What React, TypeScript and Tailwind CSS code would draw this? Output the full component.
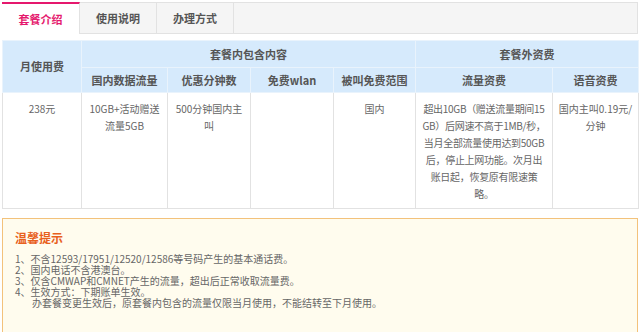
import React from 'react';

const tabs = ['套餐介绍', '使用说明', '办理方式'];

const notes = [
  '1、不含12593/17951/12520/12586等号码产生的基本通话费。',
  '2、国内电话不含港澳台。',
  '3、仅含CMWAP和CMNET产生的流量，超出后正常收取流量费。',
  '4、生效方式：下期账单生效。',
];

const flowFee = [
  '超出10GB（赠送流量期间15',
  'GB）后网速不高于1MB/秒，',
  '当月全部流量使用达到50GB',
  '后，停止上网功能。次月出',
  '账日起，恢复原有限速策',
  '略。',
];

export default function App() {
  return (
    <div
      className="w-[640px] h-[332px] overflow-hidden bg-white px-[2px] pt-[2px]"
      style={{ fontFamily: '"Noto Sans CJK SC", "Noto Sans", sans-serif' }}
    >
      {/* tabs */}
      <div className="flex h-[32px] bg-[#f5f5f5] border border-[#e2e2e2]">
        {tabs.map((t, i) => (
          <div
            key={t}
            className={
              i === 0
                ? 'w-[78px] -mt-px -ml-px h-[32px] flex items-center justify-center bg-white border-t-2 border-[#e5186d] border-r border-r-[#e2e2e2] text-[11px] font-bold text-[#e5186d]'
                : 'w-[77px] flex items-center justify-center border-r border-[#e2e2e2] text-[11px] font-bold text-[#555]'
            }
          >
            {t}
          </div>
        ))}
      </div>

      {/* table */}
      <table className="mt-[6px] w-[636px] table-fixed border-collapse text-center">
        <colgroup>
          <col className="w-[79px]" />
          <col className="w-[86px]" />
          <col className="w-[83px]" />
          <col className="w-[83px]" />
          <col className="w-[82px]" />
          <col className="w-[137px]" />
          <col className="w-[86px]" />
        </colgroup>
        <thead className="bg-[#d6eafc] text-[11px] font-bold text-[#555]">
          <tr className="h-[27px]">
            <th rowSpan={2} className="border border-[#e9f3fc] font-bold">月使用费</th>
            <th colSpan={4} className="border border-[#e9f3fc] font-bold">套餐内包含内容</th>
            <th colSpan={2} className="border border-[#e9f3fc] font-bold">套餐外资费</th>
          </tr>
          <tr className="h-[25px]">
            <th className="border border-[#e9f3fc] font-bold">国内数据流量</th>
            <th className="border border-[#e9f3fc] font-bold">优惠分钟数</th>
            <th className="border border-[#e9f3fc] font-bold">免费wlan</th>
            <th className="border border-[#e9f3fc] font-bold">被叫免费范围</th>
            <th className="border border-[#e9f3fc] font-bold">流量资费</th>
            <th className="border border-[#e9f3fc] font-bold">语音资费</th>
          </tr>
        </thead>
        <tbody className="text-[10px] leading-[17px] text-[#666]">
          <tr className="h-[116px] align-top">
            <td className="border border-[#e2e2e2] px-[6px] pt-[7px]">238元</td>
            <td className="border border-[#e2e2e2] px-[6px] pt-[7px]">10GB+活动赠送流量5GB</td>
            <td className="border border-[#e2e2e2] px-[6px] pt-[7px]">500分钟国内主叫</td>
            <td className="border border-[#e2e2e2] px-[6px] pt-[7px]"></td>
            <td className="border border-[#e2e2e2] px-[6px] pt-[7px]">国内</td>
            <td className="border border-[#e2e2e2] px-px pt-[7px] tracking-[-0.3px]">
              {flowFee.map((l) => (
                <div key={l} className="whitespace-nowrap">{l}</div>
              ))}
            </td>
            <td className="border border-[#e2e2e2] px-[5px] pt-[7px]">国内主叫0.19元/分钟</td>
          </tr>
        </tbody>
      </table>

      {/* tips */}
      <div className="mt-[9px] h-[130px] border border-[#f3c27b] bg-[#fffcee] px-[12px] pt-[12px]">
        <div className="text-[12px] leading-[14px] font-bold text-[#e8601c]">温馨提示</div>
        <div className="mt-[8px] text-[10px] leading-[11px] text-[#666]">
          {notes.map((n) => (
            <div key={n}>{n}</div>
          ))}
          <div className="pl-[17px]">办套餐变更生效后，原套餐内包含的流量仅限当月使用，不能结转至下月使用。</div>
        </div>
      </div>
    </div>
  );
}
